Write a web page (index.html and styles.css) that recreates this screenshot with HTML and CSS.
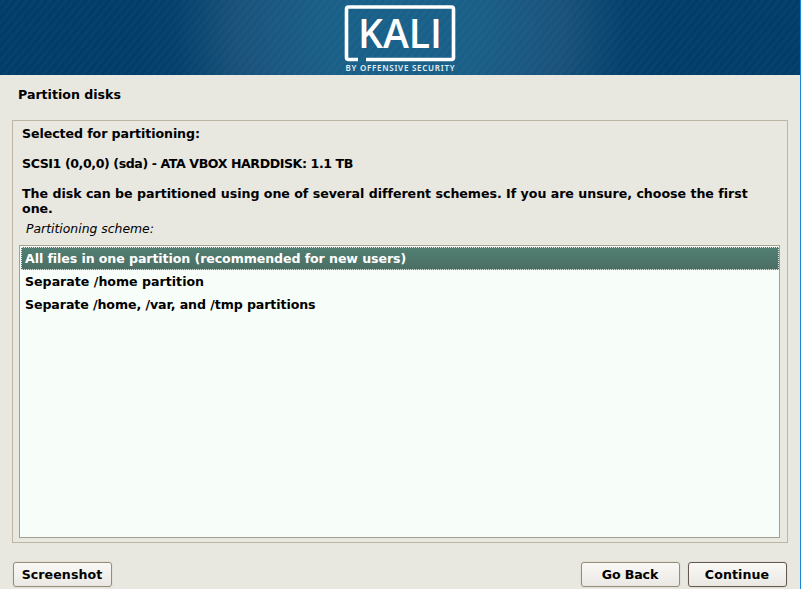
FILE: index.html
```
<!DOCTYPE html>
<html lang="en">
<head>
<meta charset="utf-8">
<title>Partition disks</title>
<link rel="stylesheet" href="styles.css">
</head>
<body>
<div class="window">
  <header class="banner">
    <svg class="logo" width="140" height="75" viewBox="330 0 140 75" role="img" aria-label="Kali">
      <path d="M358 59.500H348.500Q346.500 59.500 346.500 57.500V9Q346.500 7 348.500 7H451.500Q453.500 7 453.500 9V57.500Q453.500 59.500 451.500 59.500H366" fill="none" stroke="#fff" stroke-width="3.600"/>
      <text class="logo-name" x="358" y="47.800" textLength="84" lengthAdjust="spacingAndGlyphs">KALI</text>
      <text class="logo-tag" x="345.500" y="71" textLength="109" lengthAdjust="spacing">BY OFFENSIVE SECURITY</text>
    </svg>
  </header>
  <h1 class="title">Partition disks</h1>
  <main class="frame">
    <p class="info">Selected for partitioning:</p>
    <p class="info device">SCSI1 (0,0,0) (sda) - ATA VBOX HARDDISK: 1.1 TB</p>
    <p class="info last">The disk can be partitioned using one of several different schemes. If you are unsure, choose the first one.</p>
    <p class="label">Partitioning scheme:</p>
    <ul class="list">
      <li class="row selected">All files in one partition (recommended for new users)</li>
      <li class="row home">Separate /home partition</li>
      <li class="row">Separate /home, /var, and /tmp partitions</li>
    </ul>
  </main>
  <footer class="actions">
    <button class="button">Screenshot</button>
    <button class="button back">Go Back</button>
    <button class="button default">Continue</button>
  </footer>
</div>
</body>
</html>
```
FILE: styles.css
```
* { box-sizing: border-box; }
body { margin: 0; background: #e8e7e0; color: #000; font: bold 12.600px/15px "DejaVu Sans", sans-serif; overflow: hidden; }
.window { display: flex; flex-direction: column; width: 801px; height: 589px; border-right: 1px solid #1682dc; }
.banner {
  height: 75px; flex: none; display: flex; justify-content: center;
  background:
    repeating-linear-gradient(130deg, rgba(255,255,255,0) 0, rgba(255,255,255,.03) 3px, rgba(255,255,255,0) 6px),
    radial-gradient(circle at 400px 28px, #17608a 0, #185e86 80px, #195681 130px, #18507a 165px, #0e4a74 190px, #033f6c 225px, #003b68 270px);
}
.logo-name { font: 600 39px "Open Sans", sans-serif; fill: #fff; }
.logo-tag { font: 600 8px "Noto Sans", sans-serif; fill: #e4eef3; }
.title { margin: 12px 0 0 18px; font-size: inherit; line-height: 15px; }
.frame { display: flex; flex-direction: column; height: 423px; margin: 18px 12px 0; padding: 5px 7px 4px 6px; border: 1px solid #bdb5a3; }
.info { margin: 0 0 15px; padding-left: 3px; letter-spacing: -.08px; }
.info.device { letter-spacing: -.42px; }
.info.last { margin: 0; letter-spacing: -.02px; }
.label { margin: 5px 0 9px; padding-left: 7px; font-weight: normal; font-style: italic; font-size: 12.400px; }
.list { flex: 1; margin: 0; padding: 1px 0; border: 1px solid #a49f90; background: #f7fdf9; list-style: none; letter-spacing: -.09px; }
.row { height: 23px; padding: 4px 5px; }
.home { letter-spacing: 0; }
.selected { margin: 0 0 0 1px; padding: 3px; border: 1px dotted #dce5e0; background: linear-gradient(#527f73, #4c6e64); color: #fff; }
.actions { display: flex; gap: 8px; margin: 19px 13px 0 13px; }
.button { width: 99px; height: 25px; padding: 0 1px 0 0; border: 1px solid #998b79; border-radius: 3px; background: linear-gradient(#f9f8f5, #f0efeb 60%, #e9e8e3); box-shadow: 0 0 0 1px #e1e0d9; color: #000; font: inherit; letter-spacing: .08px; }
.back { margin-left: auto; letter-spacing: -.15px; }
.default { border-color: #665650; }
```
